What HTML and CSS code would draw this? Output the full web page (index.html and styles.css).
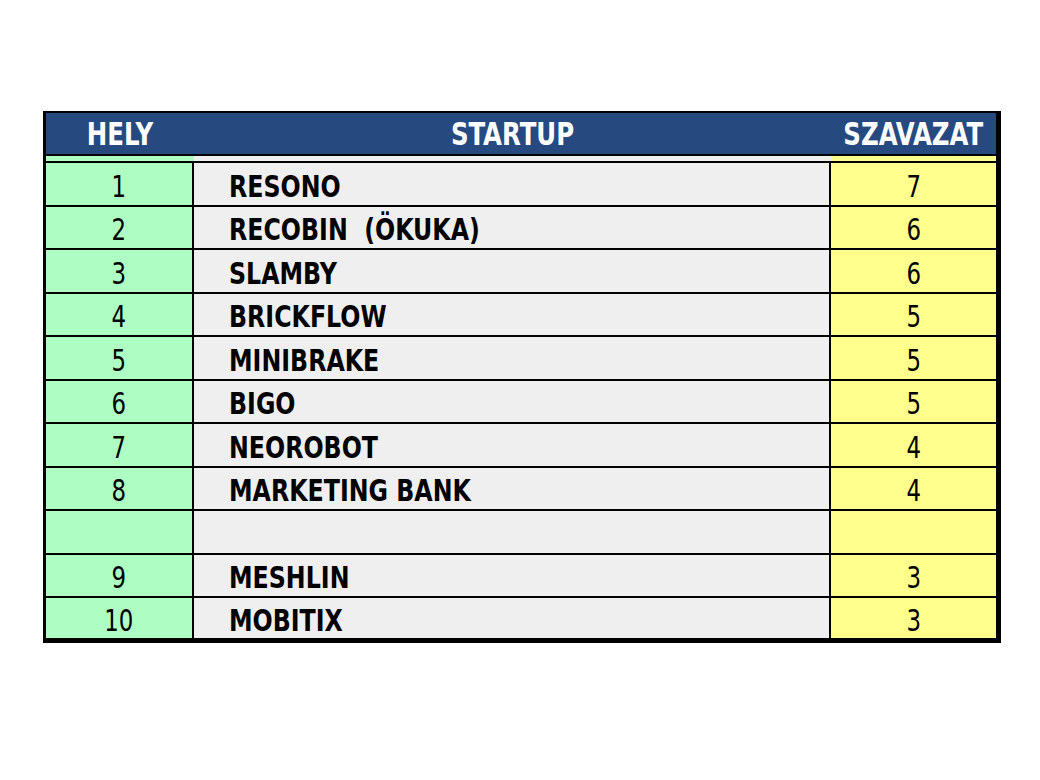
FILE: index.html
```html
<!DOCTYPE html>
<html lang="hu">
<head>
<meta charset="utf-8">
<title>Startup szavazás</title>
<link rel="stylesheet" href="styles.css">
</head>
<body>
<div class="board">
  <div class="row head">
    <div class="cell c1"><span class="t">HELY</span></div>
    <div class="cell c2"><span class="t">STARTUP</span></div>
    <div class="cell c3"><span class="t">SZAVAZAT</span></div>
  </div>
  <div class="row strip">
    <div class="cell c1"></div>
    <div class="cell c2"></div>
    <div class="cell c3"></div>
  </div>
  <div class="rows">
    <div class="row item"><div class="cell c1"><span class="t">1</span></div><div class="cell c2"><span class="t">RESONO</span></div><div class="cell c3"><span class="t">7</span></div></div>
    <div class="row item"><div class="cell c1"><span class="t">2</span></div><div class="cell c2"><span class="t">RECOBIN&nbsp; (ÖKUKA)</span></div><div class="cell c3"><span class="t">6</span></div></div>
    <div class="row item"><div class="cell c1"><span class="t">3</span></div><div class="cell c2"><span class="t">SLAMBY</span></div><div class="cell c3"><span class="t">6</span></div></div>
    <div class="row item"><div class="cell c1"><span class="t">4</span></div><div class="cell c2"><span class="t">BRICKFLOW</span></div><div class="cell c3"><span class="t">5</span></div></div>
    <div class="row item"><div class="cell c1"><span class="t">5</span></div><div class="cell c2"><span class="t">MINIBRAKE</span></div><div class="cell c3"><span class="t">5</span></div></div>
    <div class="row item"><div class="cell c1"><span class="t">6</span></div><div class="cell c2"><span class="t">BIGO</span></div><div class="cell c3"><span class="t">5</span></div></div>
    <div class="row item"><div class="cell c1"><span class="t">7</span></div><div class="cell c2"><span class="t">NEOROBOT</span></div><div class="cell c3"><span class="t">4</span></div></div>
    <div class="row item"><div class="cell c1"><span class="t">8</span></div><div class="cell c2"><span class="t">MARKETING BANK</span></div><div class="cell c3"><span class="t">4</span></div></div>
    <div class="row item"><div class="cell c1"></div><div class="cell c2"></div><div class="cell c3"></div></div>
    <div class="row item"><div class="cell c1"><span class="t">9</span></div><div class="cell c2"><span class="t">MESHLIN</span></div><div class="cell c3"><span class="t">3</span></div></div>
    <div class="row item"><div class="cell c1"><span class="t">10</span></div><div class="cell c2"><span class="t">MOBITIX</span></div><div class="cell c3"><span class="t">3</span></div></div>
  </div>
</div>
</body>
</html>
```

FILE: styles.css
```css
html, body {
  margin: 0;
  padding: 0;
  background: #ffffff;
}

body {
  padding: 111px 0 0 43px;
  font-family: "DejaVu Sans Condensed", "DejaVu Sans", sans-serif;
  font-stretch: condensed;
  color: #000;
}

.board {
  width: 950px;
  border-style: solid;
  border-color: #000;
  border-width: 2px 5px 5px 3px;
  background: #000;
}

.row {
  display: grid;
  grid-template-columns: 148px 637px 165px;
  overflow: hidden;
}

.cell {
  box-sizing: border-box;
  overflow: hidden;
  white-space: nowrap;
}

.t {
  display: inline-block;
  transform: scaleX(0.85);
  transform-origin: center;
}

.head {
  height: 41px;
  background: #264a80;
  border-bottom: 2px solid #000;
  color: #fff;
  font-weight: 700;
  font-size: 32px;
  line-height: 40px;
  text-align: center;
}

.head .cell {
  padding-top: 1px;
}

.strip {
  height: 5px;
  border-bottom: 2px solid #000;
}

.strip .c1 { background: #aefec3; }
.strip .c2 { background: #efeff0; }
.strip .c3 { background: #ffff8e; }

.rows {
  display: flex;
  flex-direction: column;
}

.item {
  height: 42px;
  border-bottom: 2px solid #000;
  font-size: 31px;
  line-height: 38px;
}

.item:nth-child(even) {
  height: 41px;
  line-height: 37px;
}

.item:last-child {
  border-bottom: 0;
  height: 40px;
  line-height: 36px;
}

.item .cell {
  padding-top: 4px;
  height: 100%;
}

.item .c1 {
  background: #aefec3;
  border-right: 2px solid #000;
  text-align: center;
}

.item .c1 .t,
.item .c3 .t {
  transform: scaleX(0.82);
}

.item .c2 {
  background: #efeff0;
  border-right: 2px solid #000;
  padding-left: 35px;
  font-weight: 700;
}

.item .c2 .t {
  transform-origin: left center;
}

.item .c3 {
  background: #ffff8e;
  text-align: center;
}
```
